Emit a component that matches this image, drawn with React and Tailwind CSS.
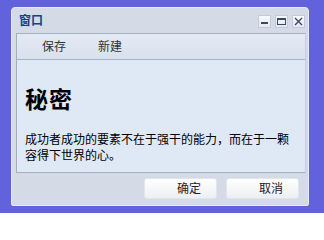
export default function App() {
  const font = { fontFamily: '"Liberation Sans", "Noto Sans CJK SC", sans-serif' };
  return (
    <div className="w-[324px] h-[213px] bg-[#6262dc] pt-[7px] pl-[11px]" style={font}>
      <div className="w-[298px] h-[199px] rounded-t-[4px] rounded-b-[2px] border border-[#e6ebf2] bg-[#d4dbe6] flex flex-col pl-[4px] pr-[2px]">
        <div className="h-[25px] flex items-center justify-between shrink-0 pl-[3px] pr-[1px]">
          <span className="text-[12px] font-bold text-[#15428b] leading-none mt-[1px]">窗口</span>
          <div className="flex gap-[4px] mt-[1px]">
            <div className="w-[13px] h-[13px] border border-[#c3cbd8] bg-gradient-to-b from-[#f7f9fc] to-[#e3e8f0] flex items-end justify-center pb-[3px]">
              <div className="w-[7px] h-[2px] bg-[#3a4a66]" />
            </div>
            <div className="w-[13px] h-[13px] border border-[#c3cbd8] bg-gradient-to-b from-[#f7f9fc] to-[#e3e8f0] flex items-center justify-center">
              <div className="w-[9px] h-[7px] border border-[#3a4a66] border-t-2" />
            </div>
            <div className="w-[13px] h-[13px] border border-[#c3cbd8] bg-gradient-to-b from-[#f7f9fc] to-[#e3e8f0] flex items-center justify-center">
              <svg width="9" height="9" viewBox="0 0 9 9">
                <path d="M1 1L8 8M8 1L1 8" stroke="#3a4a66" strokeWidth="1.4" />
              </svg>
            </div>
          </div>
        </div>
        <div className="flex flex-col h-[140px] border border-[#a3b0c2] border-r-[#c8d0dc] shrink-0">
          <div className="h-[26px] shrink-0 border-b border-[#a6b3c4] bg-gradient-to-b from-[#e3eaf4] to-[#d9e1ed] flex items-center text-[12px] text-[#333]">
            <span className="ml-[25px]">保存</span>
            <span className="ml-[32px]">新建</span>
          </div>
          <div className="flex-1 bg-[#dfe8f5] pl-[8px] pt-[27px]">
            <div className="text-[23px] font-bold text-black leading-none tracking-[1px]" style={{ fontFamily: '"Noto Sans CJK SC", serif' }}>秘密</div>
            <p className="mt-[22px] text-[12px] leading-[16px] text-black w-[270px]">
              成功者成功的要素不在于强干的能力，而在于一颗容得下世界的心。
            </p>
          </div>
        </div>
        <div className="flex-1 flex items-start justify-end gap-[9px] pt-[5px] pr-[7px]">
          <button className="w-[73px] h-[21px] rounded-[3px] border border-[#e2e6ec] bg-gradient-to-b from-[#ffffff] to-[#eceff3] text-[12px] text-[#222] pl-[17px] leading-none">确定</button>
          <button className="w-[73px] h-[21px] rounded-[3px] border border-[#e2e6ec] bg-gradient-to-b from-[#ffffff] to-[#eceff3] text-[12px] text-[#222] pl-[17px] leading-none">取消</button>
        </div>
      </div>
    </div>
  );
}
